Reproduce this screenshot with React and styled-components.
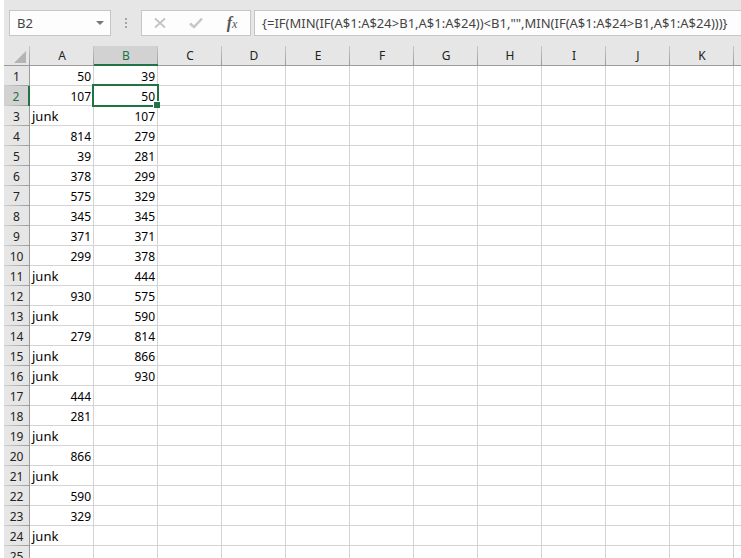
import React from 'react'
import styled, { createGlobalStyle } from 'styled-components'

const color = {
  chrome: '#e6e6e6',
  active: '#d2d2d2',
  line: '#d4d4d4',
  edge: '#9b9b9b',
  box: '#c6c6c6',
  green: '#217346',
}

const GlobalStyle = createGlobalStyle`
  * {
    box-sizing: border-box;
  }
  body {
    margin: 0;
    background: #fff;
    font-family: "Noto Sans", "Open Sans", sans-serif;
    font-size: 12px;
  }
`

const Sheet = styled.main`
  height: 100vh;
  padding-left: 4px;
  overflow: hidden;
`

const Toolbar = styled.div`
  display: flex;
  height: 46px;
  padding: 10px 0 10px 5px;
  background: ${color.chrome};
`

const Box = styled.div`
  display: flex;
  align-items: center;
  flex: none;
  width: ${(props) => props.$width};
  border: 1px solid ${color.box};
  background: #fdfdfd;
`

const FormulaBox = styled(Box)`
  flex: 1;
  min-width: 0;
  margin-left: 3px;
  border-right: none;
`

const TextInput = styled.input`
  flex: 1;
  min-width: 0;
  height: 24px;
  padding: 0 0 0 7px;
  border: none;
  outline: none;
  background: transparent;
  color: #444;
  font-family: "Noto Sans", "Open Sans", sans-serif;
  font-size: 13px;
`

const IconButton = styled.button`
  display: flex;
  align-items: center;
  justify-content: center;
  width: ${(props) => props.$width || '36px'};
  height: 24px;
  padding: 0;
  border: none;
  background: none;
  color: #555;
`

const Fx = styled.span`
  font: italic bold 16px/20px "Liberation Serif", serif;

  small {
    font-size: 12px;
    font-weight: normal;
  }
`

const Dots = styled.div`
  display: flex;
  flex-direction: column;
  align-items: center;
  justify-content: center;
  gap: 2px;
  width: 30px;

  i {
    width: 2px;
    height: 2px;
    background: #a6a6a6;
  }
`

const Grid = styled.table`
  width: 100%;
  table-layout: fixed;
  border-collapse: separate;
  border-spacing: 0;
  line-height: 16px;
`

const Col = styled.col`
  width: ${(props) => props.$width};
`

const HeadCell = styled.th`
  height: 20px;
  padding: ${(props) => (props.$active ? '1px 0 0' : '0')};
  border-bottom: ${(props) => (props.$active ? `2px solid ${color.green}` : `1px solid ${color.edge}`)};
  background:
    linear-gradient(#c8c8c8, ${color.edge}) right / 1px 100% no-repeat,
    ${(props) => (props.$active ? color.active : color.chrome)};
  color: ${(props) => (props.$active ? color.green : '#222')};
  font-weight: normal;
  vertical-align: middle;

  svg {
    display: block;
    margin: 2px 4px 0 auto;
  }

  &:last-child {
    background: ${color.chrome};
  }
`

const RowHead = styled.th`
  height: 20px;
  padding: 2px 0 0;
  border-right: ${(props) => (props.$active ? `2px solid ${color.green}` : `1px solid ${color.edge}`)};
  background:
    linear-gradient(to right, #d0d0d0, ${color.edge}) bottom / 100% 1px no-repeat,
    ${(props) => (props.$active ? color.active : color.chrome)};
  color: ${(props) => (props.$active ? color.green : '#222')};
  font-weight: normal;
`

const Cell = styled.td`
  position: relative;
  height: 20px;
  padding: ${(props) => (props.$number ? '3px 2px 0' : '1px 2px 0')};
  border-right: 1px solid ${color.line};
  border-bottom: 1px solid ${color.line};
  color: #000;
  font-size: ${(props) => (props.$number ? '12px' : '13px')};
  text-align: ${(props) => (props.$number ? 'right' : 'left')};

  &:last-child {
    border-right: none;
  }
`

const Selection = styled.div`
  position: absolute;
  inset: -2px;
  border: 2px solid ${color.green};
  z-index: 1;

  &::after {
    content: "";
    position: absolute;
    right: -3px;
    bottom: -3px;
    width: 6px;
    height: 6px;
    border: solid #fff;
    border-width: 1px 0 0 1px;
    background: ${color.green};
  }
`

const columns = ['A', 'B', 'C', 'D', 'E', 'F', 'G', 'H', 'I', 'J', 'K', '']

const data = {
  A: [50, 107, 'junk', 814, 39, 378, 575, 345, 371, 299, 'junk', 930, 'junk', 279, 'junk', 'junk', 444, 281, 'junk', 866, 'junk', 590, 329, 'junk'],
  B: [39, 50, 107, 279, 281, 299, 329, 345, 371, 378, 444, 575, 590, 814, 866, 930],
}

const rows = Array.from({ length: 25 }, (_, i) => i + 1)

const selected = { col: 'B', row: 2 }

const formula = '{=IF(MIN(IF(A$1:A$24>B1,A$1:A$24))<B1,"",MIN(IF(A$1:A$24>B1,A$1:A$24)))}'

const FormulaBar = () => (
  <Toolbar>
    <Box $width="102px">
      <TextInput aria-label="Name box" defaultValue="B2" />
      <IconButton $width="20px" aria-label="Show names">
        <svg width="8" height="4" viewBox="0 0 8 4">
          <path d="M0 0h8L4 4z" fill="#777" />
        </svg>
      </IconButton>
    </Box>
    <Dots>
      <i />
      <i />
      <i />
    </Dots>
    <Box $width="110px">
      <IconButton aria-label="Cancel">
        <svg width="12" height="12" viewBox="0 0 12 12">
          <path d="M1 1.5l10 9M11 1.5l-10 9" stroke="#c3c3c3" strokeWidth="1.8" fill="none" />
        </svg>
      </IconButton>
      <IconButton aria-label="Enter">
        <svg width="14" height="12" viewBox="0 0 14 12">
          <path d="M1 6.5l4 3.5L13 1.5" stroke="#c6c6c6" strokeWidth="2.4" fill="none" />
        </svg>
      </IconButton>
      <IconButton aria-label="Insert function">
        <Fx>
          f<small>x</small>
        </Fx>
      </IconButton>
    </Box>
    <FormulaBox>
      <TextInput aria-label="Formula" defaultValue={formula} />
    </FormulaBox>
  </Toolbar>
)

const App = () => {
  return (
    <>
      <GlobalStyle />
      <Sheet>
        <FormulaBar />
        <Grid>
          <colgroup>
            <Col $width="26px" />
            {columns.map((name) => (
              <Col key={name} $width={name ? '64px' : 'auto'} />
            ))}
          </colgroup>
          <thead>
            <tr>
              <HeadCell aria-label="Select all">
                <svg width="12" height="12" viewBox="0 0 12 12">
                  <path d="M12 0v12H0z" fill="#b4b4b4" />
                </svg>
              </HeadCell>
              {columns.map((name) => (
                <HeadCell key={name} scope="col" $active={name === selected.col}>
                  {name}
                </HeadCell>
              ))}
            </tr>
          </thead>
          <tbody>
            {rows.map((row) => (
              <tr key={row}>
                <RowHead scope="row" $active={row === selected.row}>
                  {row}
                </RowHead>
                {columns.map((name) => {
                  const value = data[name]?.[row - 1]
                  return (
                    <Cell key={name} $number={typeof value === 'number'}>
                      {value}
                      {name === selected.col && row === selected.row && <Selection />}
                    </Cell>
                  )
                })}
              </tr>
            ))}
          </tbody>
        </Grid>
      </Sheet>
    </>
  )
}

export default App
